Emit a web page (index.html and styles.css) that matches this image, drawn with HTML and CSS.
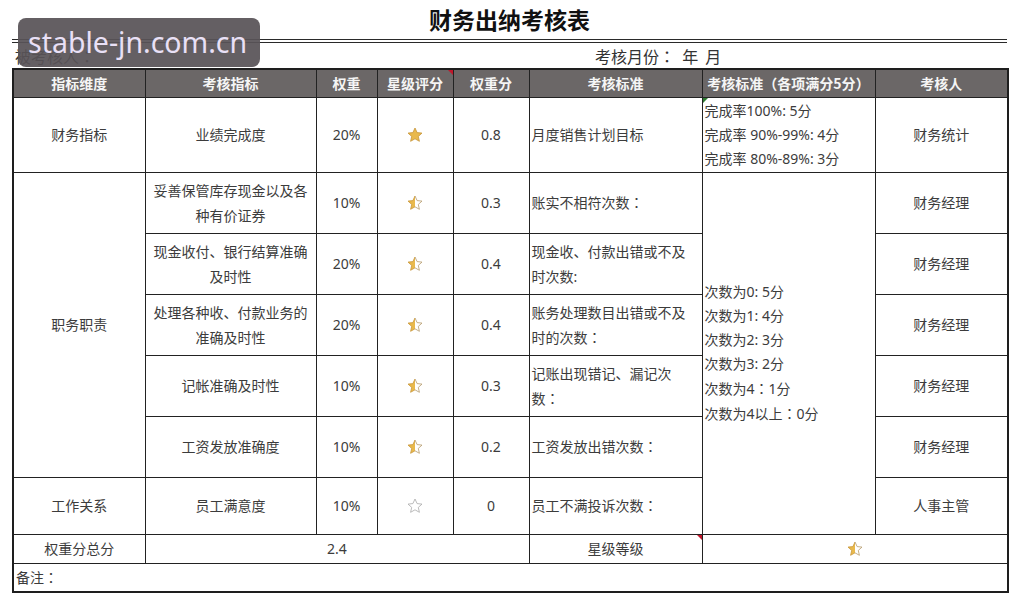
FILE: index.html
```html
<!DOCTYPE html>
<html lang="zh-CN">
<head>
<meta charset="utf-8">
<title>财务出纳考核表</title>
<link rel="stylesheet" href="styles.css">
</head>
<body>
<svg class="defs" width="0" height="0" aria-hidden="true">
  <defs>
    <linearGradient id="half" x1="0" y1="0" x2="1" y2="0">
      <stop offset="0.5" stop-color="#e9b94c"/>
      <stop offset="0.5" stop-color="#ffffff"/>
    </linearGradient>
    <linearGradient id="halfstroke" x1="0" y1="0" x2="1" y2="0">
      <stop offset="0.5" stop-color="#c7963a"/>
      <stop offset="0.5" stop-color="#b59a6a"/>
    </linearGradient>
  </defs>
</svg>
<div class="page">
  <div class="watermark">stable-jn.com.cn</div>
  <h1 class="title">财务出纳考核表</h1>
  <div class="info">
    <span class="info-left">被考核人<span class="colon" lang="zh-TW">：</span></span>
    <span class="info-right">考核月份<span class="colon" lang="zh-TW">：</span>&nbsp; 年&nbsp; 月</span>
  </div>
  <table class="sheet">
    <colgroup>
      <col style="width:132px"><col style="width:171px"><col style="width:61px"><col style="width:76px">
      <col style="width:76px"><col style="width:173px"><col style="width:173px"><col style="width:133px">
    </colgroup>
    <thead>
      <tr class="r-head">
        <th>指标维度</th><th>考核指标</th><th>权重</th>
        <th class="marked">星级评分<span class="mark"></span></th>
        <th>权重分</th><th>考核标准</th><th>考核标准<span class="colon" lang="zh-TW">（</span>各项满分5分<span class="colon" lang="zh-TW">）</span></th><th>考核人</th>
      </tr>
    </thead>
    <tbody>
      <tr class="r-1">
        <td>财务指标</td><td>业绩完成度</td><td>20%</td>
        <td><svg class="star" viewBox="0 0 16 16"><polygon points="8,1 10.1,5.6 15,6.1 11.3,9.4 12.4,14.3 8,11.8 3.6,14.3 4.7,9.4 1,6.1 5.9,5.6" fill="#e9b94c" stroke="#c7963a" stroke-width="0.8"/></svg></td>
        <td>0.8</td><td class="left">月度销售计划目标</td>
        <td class="left std marked">完成率100%: 5分<br>完成率 90%-99%: 4分<br>完成率 80%-89%: 3分<span class="mark green"></span></td>
        <td>财务统计</td>
      </tr>
      <tr class="r-n">
        <td rowspan="5">职务职责</td><td class="two">妥善保管库存现金以及各<br>种有价证券</td><td>10%</td>
        <td><svg class="star" viewBox="0 0 16 16"><polygon points="8,1 10.1,5.6 15,6.1 11.3,9.4 12.4,14.3 8,11.8 3.6,14.3 4.7,9.4 1,6.1 5.9,5.6" fill="url(#half)" stroke="url(#halfstroke)" stroke-width="0.8"/></svg></td>
        <td>0.3</td><td class="left">账实不相符次数<span class="colon" lang="zh-TW">：</span></td>
        <td rowspan="6" class="left std">次数为0: 5分<br>次数为1: 4分<br>次数为2: 3分<br>次数为3: 2分<br>次数为4<span class="colon" lang="zh-TW">：</span>1分<br>次数为4以上<span class="colon" lang="zh-TW">：</span>0分</td>
        <td>财务经理</td>
      </tr>
      <tr class="r-n">
        <td class="two">现金收付、银行结算准确<br>及时性</td><td>20%</td>
        <td><svg class="star" viewBox="0 0 16 16"><polygon points="8,1 10.1,5.6 15,6.1 11.3,9.4 12.4,14.3 8,11.8 3.6,14.3 4.7,9.4 1,6.1 5.9,5.6" fill="url(#half)" stroke="url(#halfstroke)" stroke-width="0.8"/></svg></td>
        <td>0.4</td><td class="left two">现金收、付款出错或不及<br>时次数:</td>
        <td>财务经理</td>
      </tr>
      <tr class="r-n">
        <td class="two">处理各种收、付款业务的<br>准确及时性</td><td>20%</td>
        <td><svg class="star" viewBox="0 0 16 16"><polygon points="8,1 10.1,5.6 15,6.1 11.3,9.4 12.4,14.3 8,11.8 3.6,14.3 4.7,9.4 1,6.1 5.9,5.6" fill="url(#half)" stroke="url(#halfstroke)" stroke-width="0.8"/></svg></td>
        <td>0.4</td><td class="left two">账务处理数目出错或不及<br>时的次数<span class="colon" lang="zh-TW">：</span></td>
        <td>财务经理</td>
      </tr>
      <tr class="r-n">
        <td>记帐准确及时性</td><td>10%</td>
        <td><svg class="star" viewBox="0 0 16 16"><polygon points="8,1 10.1,5.6 15,6.1 11.3,9.4 12.4,14.3 8,11.8 3.6,14.3 4.7,9.4 1,6.1 5.9,5.6" fill="url(#half)" stroke="url(#halfstroke)" stroke-width="0.8"/></svg></td>
        <td>0.3</td><td class="left two">记账出现错记、漏记次<br>数<span class="colon" lang="zh-TW">：</span></td>
        <td>财务经理</td>
      </tr>
      <tr class="r-n">
        <td>工资发放准确度</td><td>10%</td>
        <td><svg class="star" viewBox="0 0 16 16"><polygon points="8,1 10.1,5.6 15,6.1 11.3,9.4 12.4,14.3 8,11.8 3.6,14.3 4.7,9.4 1,6.1 5.9,5.6" fill="url(#half)" stroke="url(#halfstroke)" stroke-width="0.8"/></svg></td>
        <td>0.2</td><td class="left">工资发放出错次数<span class="colon" lang="zh-TW">：</span></td>
        <td>财务经理</td>
      </tr>
      <tr class="r-7">
        <td>工作关系</td><td>员工满意度</td><td>10%</td>
        <td><svg class="star" viewBox="0 0 16 16"><polygon points="8,1 10.1,5.6 15,6.1 11.3,9.4 12.4,14.3 8,11.8 3.6,14.3 4.7,9.4 1,6.1 5.9,5.6" fill="#ffffff" stroke="#a9a9a9" stroke-width="0.8"/></svg></td>
        <td>0</td><td class="left">员工不满投诉次数<span class="colon" lang="zh-TW">：</span></td>
        <td>人事主管</td>
      </tr>
      <tr class="r-s">
        <td>权重分总分</td><td colspan="4">2.4</td>
        <td class="marked">星级等级<span class="mark"></span></td>
        <td colspan="2"><svg class="star" viewBox="0 0 16 16"><polygon points="8,1 10.1,5.6 15,6.1 11.3,9.4 12.4,14.3 8,11.8 3.6,14.3 4.7,9.4 1,6.1 5.9,5.6" fill="url(#half)" stroke="url(#halfstroke)" stroke-width="0.8"/></svg></td>
      </tr>
      <tr class="r-note">
        <td colspan="8" class="left">备注<span class="colon" lang="zh-TW">：</span></td>
      </tr>
    </tbody>
  </table>
</div>
</body>
</html>
```

FILE: styles.css
```css
* { box-sizing: border-box; }
html, body { margin: 0; padding: 0; background: #ffffff; }
body {
  font-family: "Noto Sans", "Noto Sans CJK SC", sans-serif;
  color: #3a3a3a;
}
.defs { position: absolute; width: 0; height: 0; }
.page {
  position: relative;
  width: 1017px;
  padding: 0 10px 0 12px;
}
.watermark {
  position: absolute;
  left: 18px;
  top: 18px;
  width: 242px;
  height: 49px;
  border-radius: 8px;
  background: rgba(88, 83, 87, 0.93);
  color: #e9e0f6;
  font-family: "Noto Sans", sans-serif;
  font-size: 28.5px;
  line-height: 49px;
  padding-left: 10px;
  white-space: nowrap;
  z-index: 5;
}
.title {
  margin: 0;
  height: 39px;
  line-height: 39px;
  text-align: center;
  font-family: "Noto Sans CJK SC", sans-serif;
  font-size: 23px;
  font-weight: 700;
  color: #111;
}
.info {
  border-top: 4px double #2a2a2a;
  height: 29px;
  display: flex;
  align-items: center;
  font-family: "Noto Sans CJK SC", sans-serif;
  font-size: 16px;
  color: #333;
  padding-left: 3px;
}
.info-left { width: 580px; }
.colon { font-family: "Noto Sans CJK TC", "Noto Sans CJK JP", sans-serif; }
.sheet {
  width: 995px;
  table-layout: fixed;
  border-collapse: collapse;
  border: 2px solid #1e1e1e;
  font-family: "Noto Sans", "Noto Sans CJK SC", sans-serif;
  font-size: 14px;
}
.sheet th, .sheet td {
  border: 1px solid #222;
  padding: 0 2px;
  text-align: center;
  vertical-align: middle;
  line-height: 24px;
}
.sheet th {
  background: #6b6767;
  color: #f5f5f5;
  font-family: "Noto Sans CJK SC", sans-serif;
  font-weight: 700;
  font-size: 14px;
}
.sheet td { color: #3c3c3c; }
.sheet td.left { text-align: left; }
.sheet td.two { line-height: 25px; }
.r-head { height: 28px; }
.r-1 { height: 75px; }
.r-n { height: 61px; }
.r-7 { height: 57px; }
.r-s { height: 29px; }
.r-note { height: 29px; }
.r-s td, .r-note td { line-height: 20px; }
.star {
  width: 16px;
  height: 16px;
  display: block;
  margin: 0 auto;
}
.marked { position: relative; }
.mark {
  position: absolute;
  right: 0;
  top: 0;
  width: 0;
  height: 0;
  border-top: 5px solid #c0162b;
  border-left: 5px solid transparent;
}
.mark.green {
  right: auto;
  left: 0;
  border-top: 5px solid #2e7d32;
  border-left: none;
  border-right: 5px solid transparent;
}
```
